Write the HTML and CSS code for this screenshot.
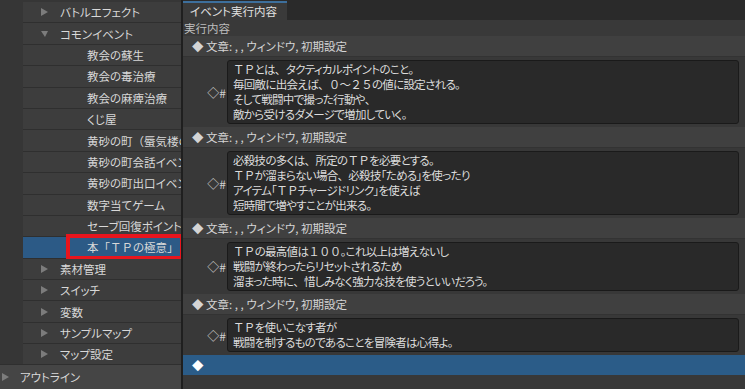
FILE: index.html
```html
<!DOCTYPE html>
<html lang="ja">

<head>
    <meta charset="UTF-8">
    <meta name="viewport" content="width=device-width, initial-scale=1.0">
    <link rel="stylesheet" href="styles.css">
</head>

<body>
    <div class="app">
        <div class="side">
            <div class="tree">
                <div class="node lv1"><span class="tri"></span>バトルエフェクト</div>
                <div class="node lv1"><span class="tri down"></span>コモンイベント</div>
                <div class="node lv2">教会の蘇生</div>
                <div class="node lv2">教会の毒治療</div>
                <div class="node lv2">教会の麻痺治療</div>
                <div class="node lv2">くじ屋</div>
                <div class="node lv2"><span class="clip">黄砂の町<span class="w">（</span>蜃気楼の塔<span class="w">）</span></span></div>
                <div class="node lv2"><span class="clip">黄砂の町会話イベント</span></div>
                <div class="node lv2"><span class="clip">黄砂の町出口イベント</span></div>
                <div class="node lv2">数字当てゲーム</div>
                <div class="node lv2">セーブ回復ポイント</div>
                <div class="node lv2 selected">本<span class="w">「ＴＰ</span>の極意<span class="w">」</span><span class="mark"></span></div>
                <div class="node lv1"><span class="tri"></span>素材管理</div>
                <div class="node lv1"><span class="tri"></span>スイッチ</div>
                <div class="node lv1"><span class="tri"></span>変数</div>
                <div class="node lv1"><span class="tri"></span>サンプルマップ</div>
                <div class="node lv1"><span class="tri"></span>マップ設定</div>
            </div>
            <div class="outline"><span class="tri"></span>アウトライン</div>
        </div>

        <div class="main">
            <div class="tabs">
                <div class="tab">イベント実行内容</div>
            </div>
            <div class="label">実行内容</div>
            <div class="list">
                <div class="cmd">◆ 文章: , , ウィンドウ, 初期設定</div>
                <div class="text-row">
                    <span class="hash">◇#</span>
                    <div class="box">
                        <p><span class="w">ＴＰ</span>とは<span class="w">、</span>タクティカルポイントのこと<span class="w">。</span></p>
                        <p>毎回敵に出会えば<span class="w">、０～２５</span>の値に設定される<span class="w">。</span></p>
                        <p>そして戦闘中で撮った行動や<span class="w">、</span></p>
                        <p>敵から受けるダメージで増加していく<span class="w">。</span></p>
                    </div>
                </div>
                <div class="cmd">◆ 文章: , , ウィンドウ, 初期設定</div>
                <div class="text-row">
                    <span class="hash">◇#</span>
                    <div class="box">
                        <p>必殺技の多くは<span class="w">、</span>所定の<span class="w">ＴＰ</span>を必要とする<span class="w">。</span></p>
                        <p><span class="w">ＴＰ</span>が溜まらない場合<span class="w">、</span>必殺技「ためる」を使ったり</p>
                        <p>アイテム「<span class="w">ＴＰ</span>チャージドリンク」を使えば</p>
                        <p>短時間で増やすことが出来る<span class="w">。</span></p>
                    </div>
                </div>
                <div class="cmd">◆ 文章: , , ウィンドウ, 初期設定</div>
                <div class="text-row">
                    <span class="hash">◇#</span>
                    <div class="box">
                        <p><span class="w">ＴＰ</span>の最高値は<span class="w">１００</span>。これ以上は増えないし</p>
                        <p>戦闘が終わったらリセットされるため</p>
                        <p>溜まった時に<span class="w">、</span>惜しみなく強力な技を使うといいだろう。</p>
                    </div>
                </div>
                <div class="cmd">◆ 文章: , , ウィンドウ, 初期設定</div>
                <div class="text-row">
                    <span class="hash">◇#</span>
                    <div class="box">
                        <p><span class="w">ＴＰ</span>を使いこなす者が</p>
                        <p>戦闘を制するものであることを冒険者は心得よ<span class="w">。</span></p>
                    </div>
                </div>
                <div class="cmd current">◆</div>
            </div>
        </div>
    </div>
</body>

</html>
```

FILE: styles.css
```css
body {
    margin: 0;
    background-color: #2a2a2a;
    color: #d8d8d8;
    font-family: "Noto Sans CJK JP", "Noto Sans", sans-serif;
    font-size: 11.5px;
    font-feature-settings: "palt";
}

/* full-width letters, digits and punctuation keep their em width */
.w {
    font-feature-settings: normal;
}

.app {
    display: flex;
    height: 389px;
    overflow: hidden;
}

/* left tree */

.side {
    width: 181px;
    flex-shrink: 0;
    display: flex;
    flex-direction: column;
    background-color: #363636;
    border-right: 2px solid #1f1f1f;
}

.tree {
    flex: 1;
    padding: 2px 0 0 23px;
    overflow: hidden;
}

.node {
    position: relative;
    height: 21.4px;
    box-sizing: border-box;
    display: flex;
    align-items: center;
    background-color: #3d3d3d;
    border-bottom: 1px solid #2f2f2f;
    white-space: nowrap;
}

.clip {
    overflow: hidden;
    min-width: 0;
}

.lv1 {
    padding-left: 18px;
}

.lv2 {
    padding-left: 64px;
}

.tri {
    flex-shrink: 0;
    width: 0;
    height: 0;
    border-top: 4px solid transparent;
    border-bottom: 4px solid transparent;
    border-left: 7px solid #7c7c7c;
    margin-right: 12px;
}

.tri.down {
    border-left: 4px solid transparent;
    border-right: 3px solid transparent;
    border-top: 6px solid #7c7c7c;
    border-bottom: none;
    margin-right: 12px;
}

.node.selected {
    background-color: #2c5a86;
}

.mark {
    position: absolute;
    left: 43px;
    top: -3px;
    right: -3px;
    bottom: -2px;
    border: 4px solid #e8151d;
}

.outline {
    height: 24px;
    display: flex;
    align-items: center;
    padding-left: 2px;
    background-color: #454545;
    border-top: 1px solid #2f2f2f;
}

.outline .tri {
    margin-right: 11px;
}

/* right panel */

.main {
    flex: 1;
    display: flex;
    flex-direction: column;
    min-width: 0;
}

.tabs {
    height: 19px;
    padding-top: 1px;
    background-color: #2a2a2a;
    display: flex;
}

.tab {
    width: 97px;
    padding-left: 7px;
    border-top: 2px solid #3d6f9c;
    background-color: #3a3a3a;
    line-height: 17px;
    color: #e0e0e0;
}

.label {
    height: 16px;
    line-height: 16px;
    padding-left: 1px;
    background-color: #393939;
    color: #bdbdbd;
}

.list {
    flex: 1;
    background-color: #383838;
}

.cmd {
    height: 20px;
    line-height: 20px;
    padding-left: 9px;
    background-color: #404040;
    border-bottom: 1px solid #333333;
    color: #d4d4d4;
}

.cmd.current {
    background-color: #2b5c88;
    border-bottom: none;
    color: #ffffff;
}

.text-row {
    display: flex;
    align-items: center;
    padding: 3px 6px 3px 0;
}

.hash {
    width: 43px;
    text-align: right;
    padding-right: 1px;
    color: #d0d0d0;
    font-size: 12px;
}

.box {
    flex: 1;
    padding: 1px 5px;
    background-color: #292929;
    border: 1px solid #1a1a1a;
    border-radius: 3px;
    overflow: hidden;
}

.box p {
    margin: 0;
    height: 15px;
    line-height: 15px;
    white-space: nowrap;
    letter-spacing: -0.7px;
    color: #dcdcdc;
}
```
